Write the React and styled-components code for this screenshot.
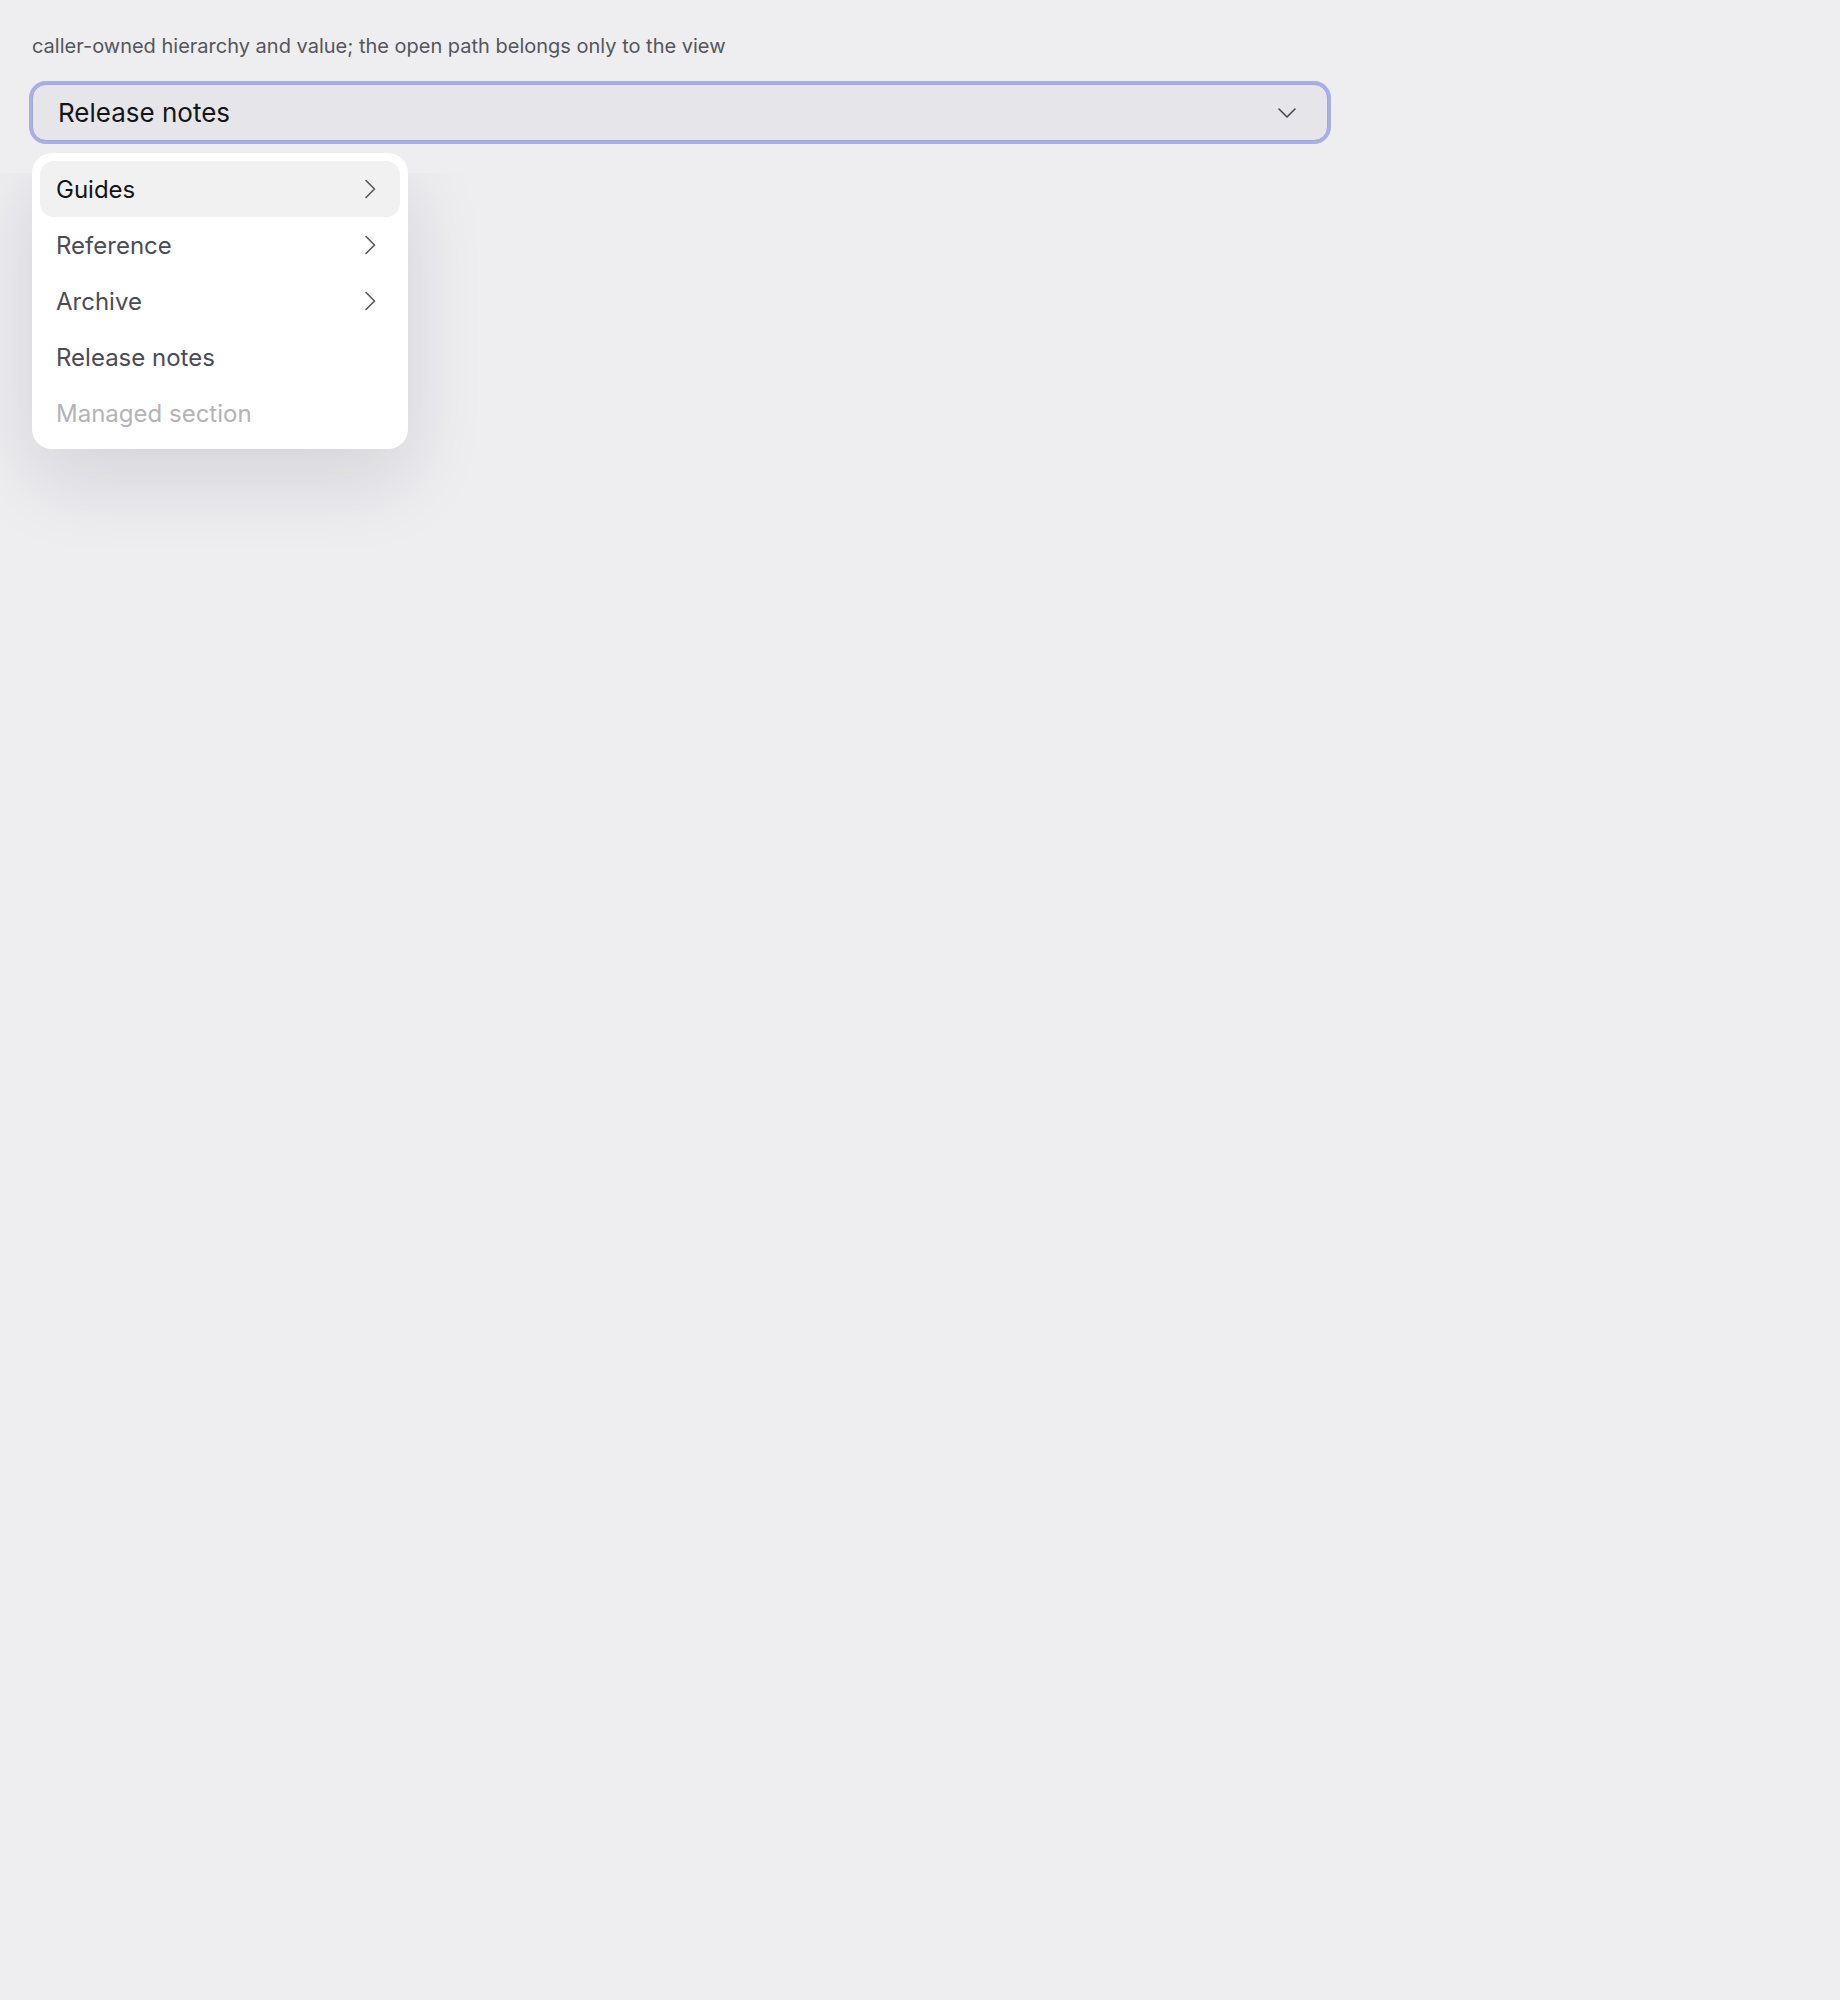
import { createGlobalStyle } from "styled-components";
import styled from "styled-components";

const GlobalStyle = createGlobalStyle`
  html, body {
    margin: 0;
    padding: 0;
    background: #eeeef1;
  }
  body {
    font-family: Inter, "Noto Sans", "Liberation Sans", sans-serif;
    -webkit-font-smoothing: antialiased;
  }
`;

const Page = styled.div`
  min-height: 2000px;
  background: #eeeef1;
`;

const Header = styled.div`
  display: flex;
  flex-direction: column;
  gap: 21px;
  padding: 32px 32px 32px;
  max-width: 1296px;
`;

const Caption = styled.p`
  margin: 0;
  font-size: 20px;
  line-height: 28px;
  color: #55555c;
`;

const Anchor = styled.div`
  position: relative;
`;

const Trigger = styled.button`
  display: flex;
  align-items: center;
  justify-content: space-between;
  width: 100%;
  height: 57px;
  margin-top: 3px;
  padding: 0 30px 0 25px;
  box-sizing: border-box;
  background: #e6e5ea;
  border: 1px solid #a1a6dd;
  border-radius: 14px;
  box-shadow: 0 0 0 3px #a9aee4;
  font-family: inherit;
  font-size: 26px;
  color: #151518;
  cursor: pointer;
  text-align: left;
`;

const Menu = styled.ul`
  position: absolute;
  top: calc(100% + 12px);
  left: 0;
  z-index: 5;
  width: 376px;
  margin: 0;
  padding: 8px;
  box-sizing: border-box;
  list-style: none;
  background: #ffffff;
  border-radius: 20px;

  &::before {
    content: "";
    position: absolute;
    inset: 0;
    border-radius: inherit;
    box-shadow: 0 30px 80px rgba(20, 20, 40, 0.12);
    clip-path: inset(20px -300px -300px -300px);
    pointer-events: none;
  }
`;

const Item = styled.li`
  position: relative;
  display: flex;
  align-items: center;
  justify-content: space-between;
  height: 56px;
  padding: 0 24px 0 16px;
  border-radius: 14px;
  font-size: 24px;
  color: ${(p) => (p.$disabled ? "#b3b3b8" : p.$active ? "#141417" : "#4b4b55")};
  background: ${(p) => (p.$active ? "#f1f1f2" : "transparent")};
  cursor: ${(p) => (p.$disabled ? "default" : "pointer")};
`;

const ChevronDown = () => (
  <svg width="20" height="12" viewBox="0 0 20 12" fill="none">
    <path d="M2 2 L10 10 L18 2" stroke="#46464d" strokeWidth="1.6" strokeLinecap="round" strokeLinejoin="round" />
  </svg>
);

const ChevronRight = () => (
  <svg width="12" height="20" viewBox="0 0 12 20" fill="none">
    <path d="M2 1.5 L10.5 10 L2 18.5" stroke="#55555f" strokeWidth="1.6" strokeLinecap="round" strokeLinejoin="round" />
  </svg>
);

const items = [
  { label: "Guides", branch: true, active: true },
  { label: "Reference", branch: true },
  { label: "Archive", branch: true },
  { label: "Release notes" },
  { label: "Managed section", disabled: true },
];

export default function App() {
  return (
    <Page>
      <GlobalStyle />
      <Header>
        <Caption>caller-owned hierarchy and value; the open path belongs only to the view</Caption>
        <Anchor>
          <Trigger type="button">
            Release notes
            <ChevronDown />
          </Trigger>
          <Menu>
            {items.map((it) => (
              <Item key={it.label} $active={it.active} $disabled={it.disabled}>
                {it.label}
                {it.branch && <ChevronRight />}
              </Item>
            ))}
          </Menu>
        </Anchor>
      </Header>
    </Page>
  );
}
